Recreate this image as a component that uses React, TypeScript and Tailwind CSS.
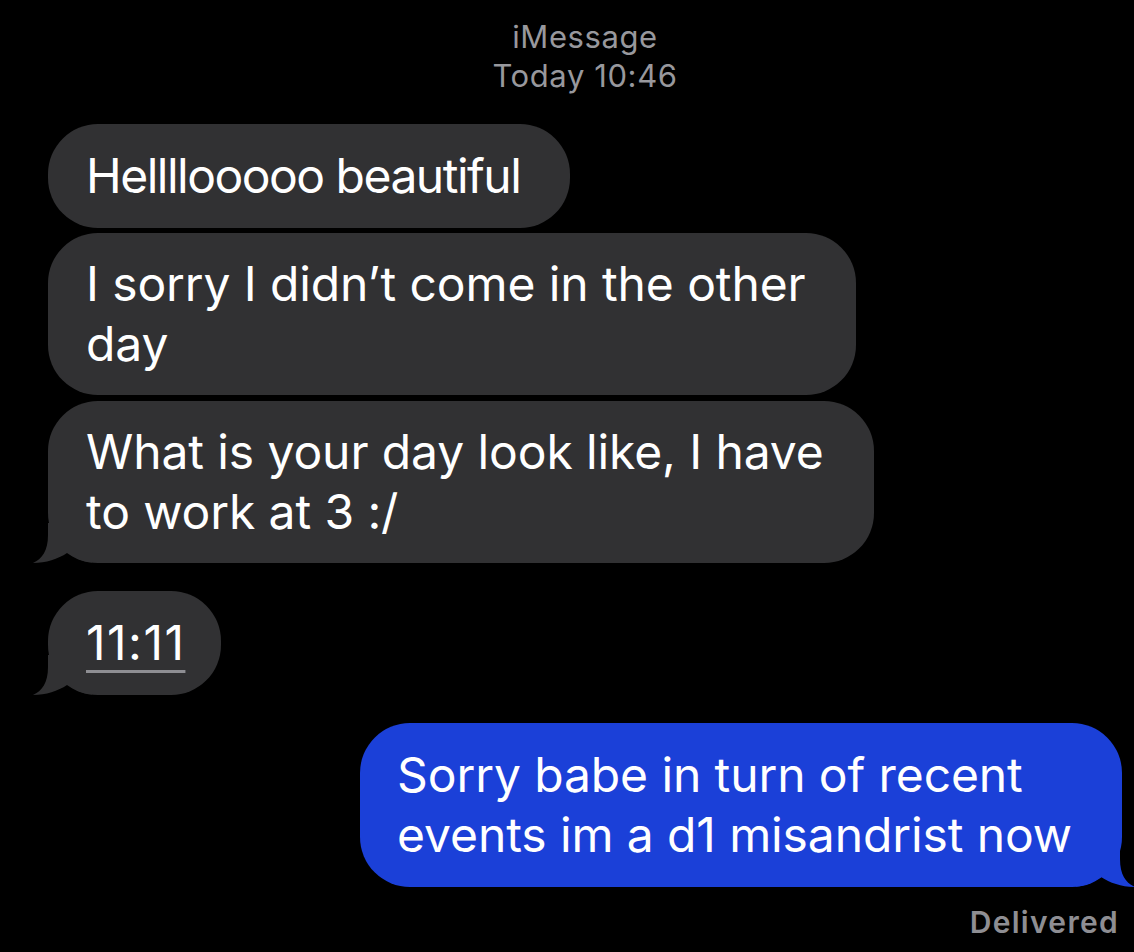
import React from 'react'

const font = { fontFamily: 'Inter, "Noto Sans", sans-serif' }

function Tail({ side, color }: { side: 'left' | 'right'; color: string }) {
    return (
        <svg
            width="60"
            height="40"
            viewBox="0 0 60 40"
            className={
                side === 'left'
                    ? 'absolute bottom-0 left-[-16px]'
                    : 'absolute bottom-0 right-[-14px] scale-x-[-1]'
            }
        >
            <path
                d="M16 0 L16 12 C16 28 10 36 1 40 C14 40 26 36 35 30 C42 35 50 39 60 39.5 L60 0 Z"
                fill={color}
            />
        </svg>
    )
}

function Received({ children, tail = false, className = 'pr-[50px]' }: { children: React.ReactNode; tail?: boolean; className?: string }) {
    return (
        <div className={`relative self-start rounded-[50px] bg-[#313133] pl-[38px] py-[21px] text-white ${className}`}>
            {tail && <Tail side="left" color="#313133" />}
            <div className="relative">{children}</div>
        </div>
    )
}

export default function App() {
    return (
        <div className="w-[1134px] h-[952px] bg-black overflow-hidden" style={font}>
            <div className="flex flex-col items-center pt-[17px] pl-[36px] text-[31px] leading-[39px] tracking-[0.6px] text-[#98989d]">
                <span>iMessage</span>
                <span>Today 10:46</span>
            </div>

            <div className="flex flex-col px-[48px] mt-[29px] text-[48px] leading-[60px] tracking-[-0.1px]">
                <Received className="pr-[50px] py-[22px] tracking-[-1.5px]">Hellllooooo beautiful</Received>
                <Received className="pr-[50px] mt-[5px]">
                    I sorry I didn’t come in the other<br />day
                </Received>
                <Received className="pr-[50px] mt-[6px]" tail>
                    What is your day look like, I have<br />to work at 3 :/
                </Received>
                <Received className="pr-[36px] py-[22px] mt-[28px]" tail>
                    <span className="tracking-[1.5px] underline decoration-[#8e8e93] decoration-[3px] underline-offset-[10px]">11:11</span>
                </Received>

                <div className="relative self-end mr-[-36px] mt-[28px] rounded-[50px] bg-[#1b40d8] pl-[37px] pr-[50px] py-[22px] text-white">
                    <Tail side="right" color="#1b40d8" />
                    <div className="relative">
                        Sorry babe in turn of recent<br />events im a d1 misandrist now
                    </div>
                </div>
            </div>

            <div className="flex justify-end pr-[15px] mt-[17px] text-[30px] leading-[36px] font-semibold tracking-[1.3px] text-[#8e8e93]">
                Delivered
            </div>
        </div>
    )
}
